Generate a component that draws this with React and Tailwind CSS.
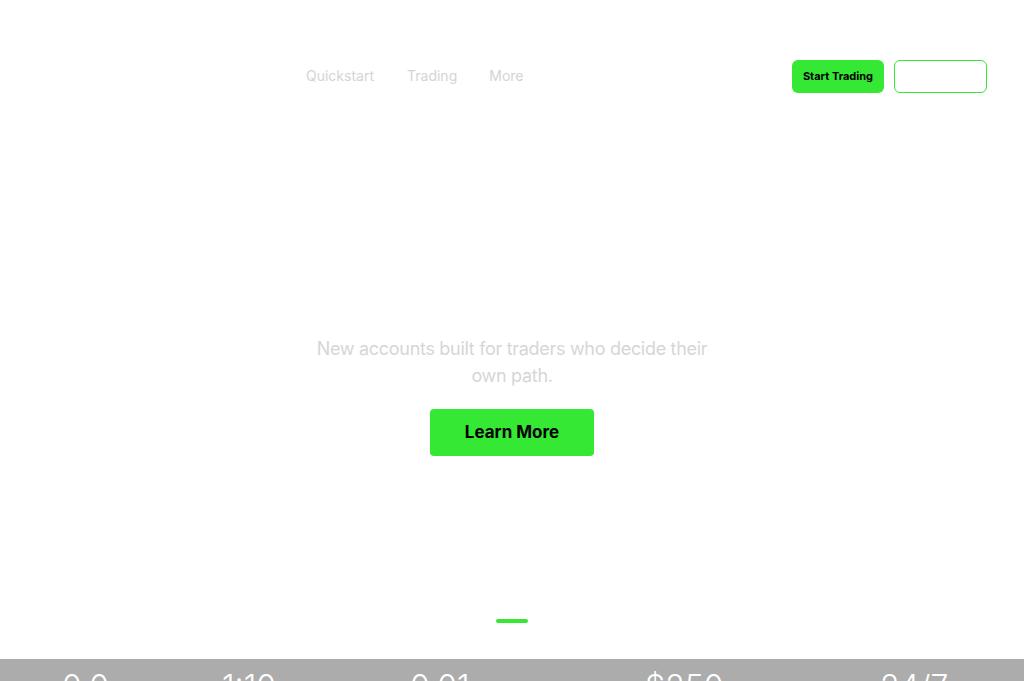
export default function App() {
  const stats = [
    { v: "0.0", w: "w-[160px]" },
    { v: "1:10", w: "w-[188px]" },
    { v: "0.01", w: "w-[235px]" },
    { v: "$250", w: "w-[235px]" },
    { v: "24/7", w: "w-[120px]" },
  ];
  return (
    <div className="w-[1024px] h-[681px] overflow-hidden bg-white flex flex-col" style={{ fontFamily: "Inter, 'Noto Sans', sans-serif" }}>
      <header className="h-[153px] shrink-0 flex items-start pt-[60px] px-[37px]">
        <div className="w-[269px]" />
        <nav className="flex items-center h-[31px] text-[14px] text-[#d4d4d4]">
          <span>Quickstart</span>
          <span className="ml-[33px]">Trading</span>
          <span className="ml-[32px]">More</span>
        </nav>
        <div className="ml-auto flex items-center gap-[10px]">
          <button className="h-[33px] w-[92px] rounded-[6px] bg-[#34e834] text-[11px] font-bold text-black">Start Trading</button>
          <button className="h-[33px] w-[93px] rounded-[6px] border border-[#34e834] bg-white"></button>
        </div>
      </header>
      <main className="flex-1 flex flex-col items-center">
        <div className="h-[182px]" />
        <p className="w-[410px] text-center text-[18px] leading-[27px] text-[#d6d6d6] tracking-[-0.3px]">
          New accounts built for traders who decide their own path.
        </p>
        <button className="mt-[20px] w-[164px] h-[47px] rounded-[4px] bg-[#34e834] text-[17px] font-bold text-black">Learn More</button>
        <div className="mt-auto mb-[36px] w-[32px] h-[4px] rounded-full bg-[#34e834]" />
      </main>
      <section className="h-[22px] shrink-0 bg-[#acacac] flex pl-[62px] pt-[12px] overflow-hidden">
        {stats.map((s) => (
          <div key={s.v} className={`${s.w} shrink-0 text-[32px] leading-none text-white font-light`}>{s.v}</div>
        ))}
      </section>
    </div>
  );
}
